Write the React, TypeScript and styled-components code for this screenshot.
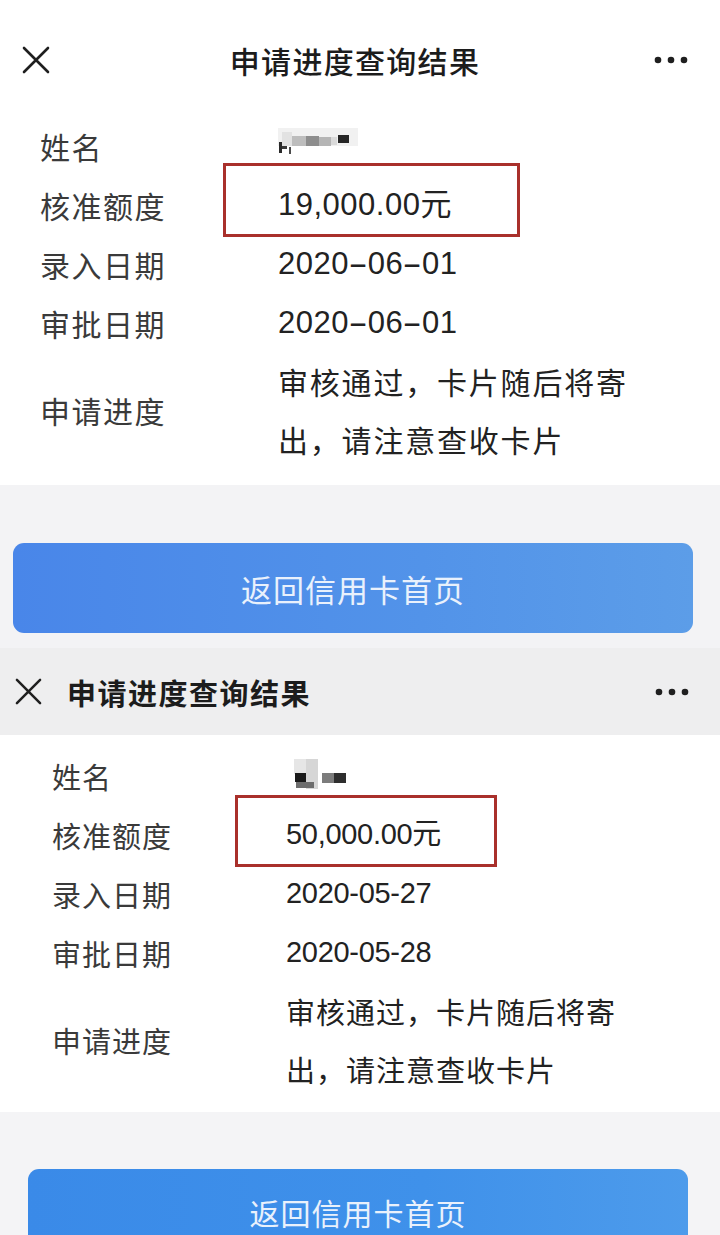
import React from 'react'
import styled, { createGlobalStyle } from 'styled-components'

const GlobalStyle = createGlobalStyle`
  html, body {
    margin: 0;
    padding: 0;
    background: #ffffff;
  }
  body {
    font-family: "Liberation Sans", "Noto Sans CJK SC", sans-serif;
    -webkit-font-smoothing: antialiased;
  }
`

type Variant = 'a' | 'b'

const Page = styled.div`
  width: 720px;
  height: 1235px;
  overflow: hidden;
  display: flex;
  flex-direction: column;
`

const Shot = styled.section`
  display: flex;
  flex-direction: column;
`

const TopBar = styled.header<{ $variant: Variant }>`
  display: flex;
  align-items: center;
  box-sizing: border-box;
  height: ${({ $variant }) => ($variant === 'a' ? '116px' : '87px')};
  padding: ${({ $variant }) => ($variant === 'a' ? '3px 32px 0 22px' : '0 31px 0 15px')};
  background: ${({ $variant }) => ($variant === 'a' ? '#ffffff' : '#eeeeef')};
`

const Title = styled.h1<{ $variant: Variant }>`
  margin: 0;
  flex: 1;
  font-family: "Noto Sans CJK SC", sans-serif;
  color: #1c1c1c;
  font-size: ${({ $variant }) => ($variant === 'a' ? '30px' : '29px')};
  line-height: 34px;
  letter-spacing: ${({ $variant }) => ($variant === 'a' ? '1.3px' : '1.5px')};
  font-weight: ${({ $variant }) => ($variant === 'a' ? 500 : 700)};
  text-align: ${({ $variant }) => ($variant === 'a' ? 'center' : 'left')};
  padding-left: ${({ $variant }) => ($variant === 'a' ? '6px' : '25px')};
`

const IconBox = styled.span`
  display: flex;
  align-items: center;
  justify-content: center;
  flex-shrink: 0;
`

const CloseIcon = ({ size }: { size: number }) => (
  <IconBox>
    <svg width={size} height={size} viewBox="0 0 28 28">
      <path d="M2 2 L26 26 M26 2 L2 26" stroke="#1f1f1f" strokeWidth="2.6" strokeLinecap="round" fill="none" />
    </svg>
  </IconBox>
)

const MoreIcon = () => (
  <IconBox>
    <svg width="34" height="8" viewBox="0 0 34 8">
      <circle cx="4" cy="4" r="3.3" fill="#1f1f1f" />
      <circle cx="17" cy="4" r="3.3" fill="#1f1f1f" />
      <circle cx="30" cy="4" r="3.3" fill="#1f1f1f" />
    </svg>
  </IconBox>
)

const InfoCard = styled.div<{ $variant: Variant }>`
  background: #ffffff;
  display: grid;
  grid-template-columns: ${({ $variant }) => ($variant === 'a' ? '238px 1fr' : '234px 1fr')};
  padding: ${({ $variant }) => ($variant === 'a' ? '0 30px 17px 40px' : '11px 40px 14px 52px')};
`

const Label = styled.div<{ $variant: Variant }>`
  display: flex;
  align-items: center;
  font-family: "Noto Sans CJK SC", sans-serif;
  font-size: ${({ $variant }) => ($variant === 'a' ? '30px' : '29px')};
  letter-spacing: ${({ $variant }) => ($variant === 'a' ? '1.5px' : '1px')};
  color: #3a3a3a;
  min-height: 59px;
`

const Value = styled.div<{ $variant: Variant }>`
  position: relative;
  font-size: ${({ $variant }) => ($variant === 'a' ? '31px' : '29px')};
  line-height: 59px;
  color: #222222;
  letter-spacing: ${({ $variant }) => ($variant === 'a' ? '0.5px' : '-0.3px')};
`

const Dash = styled.span<{ $variant: Variant }>`
  display: inline-block;
  padding: ${({ $variant }) => ($variant === 'a' ? '0 4px' : '0')};
  transform: ${({ $variant }) => ($variant === 'a' ? 'scaleX(1.9)' : 'none')};
`

const Wrap = styled.span<{ $variant: Variant }>`
  display: block;
  font-family: "Noto Sans CJK SC", sans-serif;
  font-size: ${({ $variant }) => ($variant === 'a' ? '30px' : '29px')};
  line-height: 58px;
  letter-spacing: ${({ $variant }) => ($variant === 'a' ? '1.8px' : '1px')};
  max-width: ${({ $variant }) => ($variant === 'a' ? '375px' : '345px')};
`

const Highlight = styled.span<{ $variant: Variant }>`
  position: absolute;
  box-sizing: border-box;
  border: 3px solid #a9302b;
  left: ${({ $variant }) => ($variant === 'a' ? '-55px' : '-51px')};
  top: ${({ $variant }) => ($variant === 'a' ? '-12px' : '-10px')};
  width: ${({ $variant }) => ($variant === 'a' ? '297px' : '262px')};
  height: ${({ $variant }) => ($variant === 'a' ? '74px' : '72px')};
  pointer-events: none;
`

const Mosaic = styled.span`
  position: relative;
  display: inline-block;
  width: 80px;
  height: 59px;
  vertical-align: top;
`

const Tile = styled.span<{ $x: number; $y: number; $w: number; $h: number; $c: string }>`
  position: absolute;
  left: ${({ $x }) => $x}px;
  top: ${({ $y }) => $y}px;
  width: ${({ $w }) => $w}px;
  height: ${({ $h }) => $h}px;
  background: ${({ $c }) => $c};
`

type TileDef = [number, number, number, number, string]

const mosaicA: TileDef[] = [
  [0, 12, 80, 18, '#f1f1f1'],
  [4, 16, 10, 14, '#e2e2e2'],
  [14, 20, 14, 10, '#bdbdbd'],
  [28, 20, 13, 10, '#8d8d8d'],
  [41, 21, 12, 9, '#b5b5b5'],
  [53, 21, 6, 8, '#dadada'],
  [60, 19, 11, 8, '#262626'],
  [1, 26, 3, 11, '#2a2a2a'],
  [4, 30, 5, 3, '#3a3a3a'],
  [11, 31, 2, 7, '#4a4a4a'],
]

const mosaicB: TileDef[] = [
  [8, 13, 24, 15, '#e6e6e6'],
  [20, 13, 12, 30, '#d6d6d6'],
  [9, 27, 11, 9, '#1a1a1a'],
  [10, 36, 18, 6, '#6d6d6d'],
  [36, 27, 12, 10, '#7c7c7c'],
  [48, 27, 12, 10, '#2e2e2e'],
]

const NameMosaic = ({ tiles }: { tiles: TileDef[] }) => (
  <Mosaic>
    {tiles.map(([x, y, w, h, c], i) => (
      <Tile key={i} $x={x} $y={y} $w={w} $h={h} $c={c} />
    ))}
  </Mosaic>
)

const DateText = ({ variant, date }: { variant: Variant; date: string }) => {
  const parts = date.split('-')
  return (
    <>
      {parts.map((p, i) => (
        <React.Fragment key={i}>
          {i > 0 && <Dash $variant={variant}>-</Dash>}
          {p}
        </React.Fragment>
      ))}
    </>
  )
}

const Footer = styled.div<{ $variant: Variant }>`
  background: ${({ $variant }) => ($variant === 'a' ? '#f3f3f5' : '#f4f4f6')};
  padding: ${({ $variant }) => ($variant === 'a' ? '58px 27px 15px 13px' : '57px 32px 0 28px')};
  height: ${({ $variant }) => ($variant === 'a' ? 'auto' : '200px')};
`

const BackButton = styled.button<{ $variant: Variant }>`
  display: block;
  width: 100%;
  height: 90px;
  border: none;
  border-radius: 11px;
  background: ${({ $variant }) =>
    $variant === 'a'
      ? 'linear-gradient(90deg, #4986e9 0%, #5293e9 60%, #5c9de8 100%)'
      : 'linear-gradient(90deg, #3a8ae8 0%, #3f91ea 60%, #4d9beb 100%)'};
  color: #e9f1fc;
  font-family: "Noto Sans CJK SC", sans-serif;
  font-size: ${({ $variant }) => ($variant === 'a' ? '31px' : '30px')};
  letter-spacing: 1px;
  padding: ${({ $variant }) => ($variant === 'a' ? '0' : '0 0 4px 0')};
  cursor: pointer;
`

type Item = { label: string; value: React.ReactNode; boxed?: boolean }

const DetailRows = ({ variant, items }: { variant: Variant; items: Item[] }) => (
  <InfoCard $variant={variant}>
    {items.map((it) => (
      <React.Fragment key={it.label}>
        <Label $variant={variant}>{it.label}</Label>
        <Value $variant={variant}>
          {it.value}
          {it.boxed && <Highlight $variant={variant} />}
        </Value>
      </React.Fragment>
    ))}
  </InfoCard>
)

const progress = (variant: Variant) => <Wrap $variant={variant}>审核通过，卡片随后将寄出，请注意查收卡片</Wrap>

export default function App() {
  const first: Item[] = [
    { label: '姓名', value: <NameMosaic tiles={mosaicA} /> },
    { label: '核准额度', value: '19,000.00元', boxed: true },
    { label: '录入日期', value: <DateText variant="a" date="2020-06-01" /> },
    { label: '审批日期', value: <DateText variant="a" date="2020-06-01" /> },
    { label: '申请进度', value: progress('a') },
  ]
  const second: Item[] = [
    { label: '姓名', value: <NameMosaic tiles={mosaicB} /> },
    { label: '核准额度', value: '50,000.00元', boxed: true },
    { label: '录入日期', value: <DateText variant="b" date="2020-05-27" /> },
    { label: '审批日期', value: <DateText variant="b" date="2020-05-28" /> },
    { label: '申请进度', value: progress('b') },
  ]

  return (
    <>
      <GlobalStyle />
      <Page>
        <Shot>
          <TopBar $variant="a">
            <CloseIcon size={28} />
            <Title $variant="a">申请进度查询结果</Title>
            <MoreIcon />
          </TopBar>
          <DetailRows variant="a" items={first} />
          <Footer $variant="a">
            <BackButton $variant="a">返回信用卡首页</BackButton>
          </Footer>
        </Shot>
        <Shot>
          <TopBar $variant="b">
            <CloseIcon size={27} />
            <Title $variant="b">申请进度查询结果</Title>
            <MoreIcon />
          </TopBar>
          <DetailRows variant="b" items={second} />
          <Footer $variant="b">
            <BackButton $variant="b">返回信用卡首页</BackButton>
          </Footer>
        </Shot>
      </Page>
    </>
  )
}
